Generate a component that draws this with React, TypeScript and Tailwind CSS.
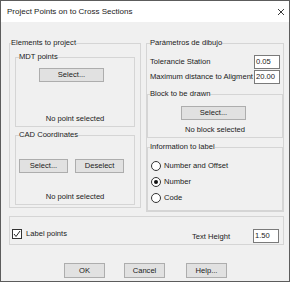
import React from 'react'

function Btn({ label, className = '' }: { label: string; className?: string }) {
  return (
    <button className={`h-[14px] bg-[#e1e1e1] border border-[#adadad] flex items-center justify-center ${className}`}>
      {label}
    </button>
  )
}

function Field({ value }: { value: string }) {
  return (
    <div className="w-[26px] h-[14px] bg-white border border-[#7a7a7a] flex items-center pl-[1px]">
      {value}
    </div>
  )
}

function Radio({ label, checked = false }: { label: string; checked?: boolean }) {
  return (
    <div className="flex items-center gap-[3px] h-[10px]">
      <span className="w-[10px] h-[10px] rounded-full border border-[#333] bg-white flex items-center justify-center">
        {checked && <span className="w-[4px] h-[4px] rounded-full bg-[#111]"></span>}
      </span>
      <span>{label}</span>
    </div>
  )
}

export default function App() {
  return (
    <div className="w-[290px] h-[282px] border border-[#5c5c5c] bg-[#f0f0f0] flex flex-col text-[7.6px] leading-[10px] text-[#1a1a1a] whitespace-nowrap font-['Liberation_Sans',Arial,sans-serif]">
      {/* Title bar */}
      <div className="h-[21px] bg-white flex items-center justify-between pl-[6px] pr-[5px]">
        <span className="text-[8px]">Project Points on to Cross Sections</span>
        <svg width="6" height="6" viewBox="0 0 6 6">
          <path d="M0 0 L6 6 M6 0 L0 6" stroke="#222" strokeWidth="0.9" />
        </svg>
      </div>

      <div className="flex flex-col pl-[8px]">
        <div className="flex items-start mt-[16px]">
          {/* Elements to project */}
          <fieldset className="w-[132px] border border-[#d5d5d5] pb-[2px]">
            <legend className="ml-[1px] h-[10px]">Elements to project</legend>
            <fieldset className="mx-[5px] mt-[4px] border border-[#d5d5d5] pb-[2px]">
              <legend className="ml-[3px] h-[10px]">MDT points</legend>
              <Btn label="Select..." className="w-[65px] ml-[23px] mt-[6px]" />
              <div className="mt-[32px] text-center">No point selected</div>
            </fieldset>
            <fieldset className="mx-[5px] mt-[3px] border border-[#d5d5d5] pb-[2px]">
              <legend className="ml-[3px] h-[10px]">CAD Coordinates</legend>
              <div className="flex gap-[7px] ml-[3px] mt-[19px]">
                <Btn label="Select..." className="w-[49px]" />
                <Btn label="Deselect" className="w-[49px]" />
              </div>
              <div className="mt-[19px] text-center">No point selected</div>
            </fieldset>
          </fieldset>

          {/* Parámetros de dibujo */}
          <fieldset className="w-[138px] ml-[5px] border border-[#d5d5d5]">
            <legend className="ml-[3px] h-[10px]">Parámetros de dibujo</legend>
            <div className="flex items-center justify-between pl-[3px] pr-[3px] mt-[7px]">
              <span>Tolerancie Station</span>
              <Field value="0.05" />
            </div>
            <div className="flex items-center justify-between pl-[3px] pr-[3px] mt-[1px]">
              <span>Maximum distance to Aligment</span>
              <Field value="20.00" />
            </div>
            <fieldset className="mt-[5px] border border-[#d5d5d5] pb-[2px]">
              <legend className="ml-[2px] h-[10px]">Block to be drawn</legend>
              <Btn label="Select..." className="w-[65px] ml-[33px] mt-[7px]" />
              <div className="mt-[5px] text-center">No block selected</div>
            </fieldset>
            <fieldset className="mt-[4px] border border-[#d5d5d5] pb-[7px]">
              <legend className="ml-[2px] h-[10px]">Information to label</legend>
              <div className="flex flex-col gap-[6px] pl-[3px] mt-[9px]">
                <Radio label="Number and Offset" />
                <Radio label="Number" checked />
                <Radio label="Code" />
              </div>
            </fieldset>
          </fieldset>
        </div>

        {/* Label points */}
        <div className="w-[275px] h-[29px] mt-[4px] border border-[#d5d5d5] flex items-start pl-[2px] pr-[4px]">
          <div className="flex items-center gap-[4px] mt-[12px] h-[10px]">
            <span className="w-[10px] h-[10px] border border-[#333] bg-white flex items-center justify-center">
              <svg width="8" height="8" viewBox="0 0 8 8">
                <path d="M1 4 L3 6.5 L7 1" fill="none" stroke="#222" strokeWidth="1" />
              </svg>
            </span>
            <span>Label points</span>
          </div>
          <div className="ml-auto flex items-start">
            <span className="w-[61px] mt-[15px]">Text Height</span>
            <div className="mt-[12px]">
              <Field value="1.50" />
            </div>
          </div>
        </div>

        {/* Buttons */}
        <div className="flex mt-[18px] ml-[55px]">
          <Btn label="OK" className="w-[41px] !h-[15px] border-[#0078d7]" />
          <Btn label="Cancel" className="w-[41px] !h-[15px] ml-[19px]" />
          <Btn label="Help..." className="w-[41px] !h-[15px] ml-[21px]" />
        </div>
      </div>
    </div>
  )
}
